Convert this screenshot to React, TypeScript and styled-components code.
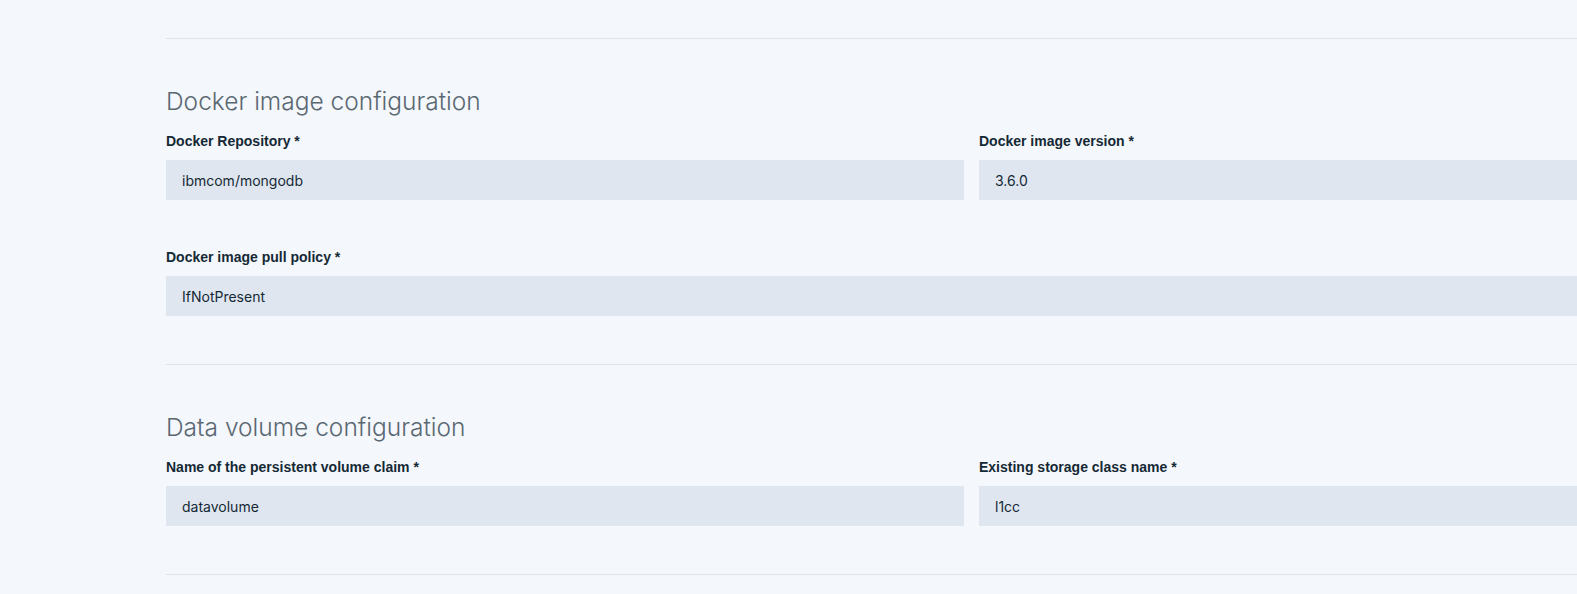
import React from "react";
import styled, { createGlobalStyle } from "styled-components";

const GlobalStyle = createGlobalStyle`
  html, body {
    margin: 0;
    padding: 0;
    background: #f4f7fb;
    overflow: hidden;
  }
  * { box-sizing: border-box; }
`;

const Page = styled.div`
  padding: 38px 0 0 166px;
  width: 1777px;
`;

const Section = styled.section`
  border-top: 1px solid #dfe3e6;
  padding: 46px 0 48px;
`;

const Heading = styled.h2`
  margin: 0 0 16px;
  font-family: Inter, "Open Sans", sans-serif;
  font-weight: 300;
  font-size: 24.5px;
  line-height: 32px;
  color: #5a6872;
`;

const Row = styled.div<{ $cols: number }>`
  display: grid;
  grid-template-columns: ${(p) => (p.$cols === 2 ? "798px 798px" : "1611px")};
  column-gap: 15px;
  & + & {
    margin-top: 49px;
  }
`;

const Field = styled.div`
  display: flex;
  flex-direction: column;
`;

const Label = styled.label`
  font-family: "Liberation Sans", Arial, sans-serif;
  font-weight: 700;
  font-size: 14px;
  line-height: 16px;
  color: #152935;
  margin-bottom: 11px;
`;

const Input = styled.div`
  height: 40px;
  background: #dfe6f0;
  padding: 0 16px;
  display: flex;
  align-items: center;
  font-family: Inter, "Open Sans", sans-serif;
  font-size: 14px;
  color: #152935;
`;

type FieldDef = { label: string; value: string };

const sections: { title: string; rows: FieldDef[][] }[] = [
  {
    title: "Docker image configuration",
    rows: [
      [
        { label: "Docker Repository *", value: "ibmcom/mongodb" },
        { label: "Docker image version *", value: "3.6.0" },
      ],
      [{ label: "Docker image pull policy *", value: "IfNotPresent" }],
    ],
  },
  {
    title: "Data volume configuration",
    rows: [
      [
        { label: "Name of the persistent volume claim *", value: "datavolume" },
        { label: "Existing storage class name *", value: "l1cc" },
      ],
    ],
  },
];

export default function App() {
  return (
    <>
      <GlobalStyle />
      <Page>
        {sections.map((s) => (
          <Section key={s.title}>
            <Heading>{s.title}</Heading>
            {s.rows.map((row, i) => (
              <Row key={i} $cols={row.length}>
                {row.map((f) => (
                  <Field key={f.label}>
                    <Label>{f.label}</Label>
                    <Input>{f.value}</Input>
                  </Field>
                ))}
              </Row>
            ))}
          </Section>
        ))}
        <Section />
      </Page>
    </>
  );
}
